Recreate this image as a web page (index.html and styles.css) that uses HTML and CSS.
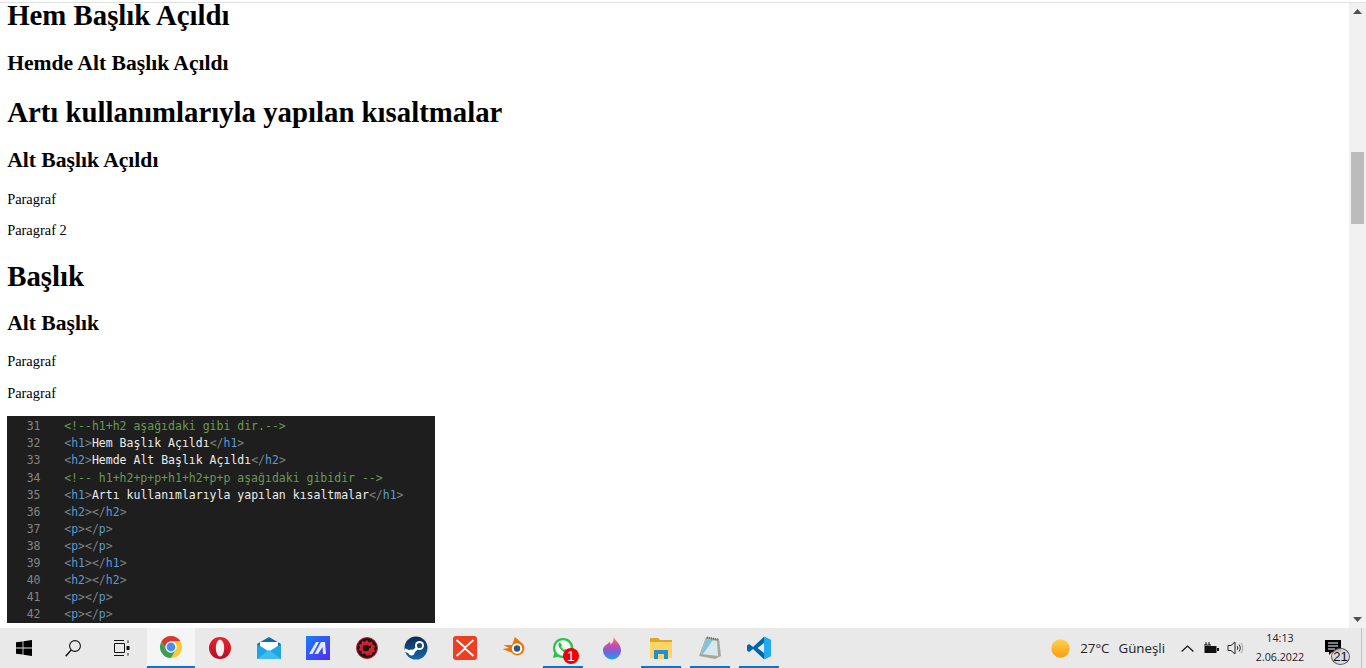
FILE: index.html
```html
<!DOCTYPE html>
<html lang="tr">
<head>
<meta charset="utf-8">
<title>Başlık</title>
<link rel="stylesheet" href="styles.css">
</head>
<body>
<div class="topline"></div>
<div class="viewport">
  <main class="doc">
    <h1 class="first">Hem Başlık Açıldı</h1>
    <h2>Hemde Alt Başlık Açıldı</h2>
    <h1>Artı kullanımlarıyla yapılan kısaltmalar</h1>
    <h2>Alt Başlık Açıldı</h2>
    <p>Paragraf</p>
    <p>Paragraf 2</p>
    <h1 class="low">Başlık</h1>
    <h2>Alt Başlık</h2>
    <p>Paragraf</p>
    <p>Paragraf</p>
    <div class="code">
      <div class="ln"><i>31</i><span class="c">&lt;!--h1+h2 aşağıdaki gibi dir.--&gt;</span></div>
      <div class="ln"><i>32</i><span><b>&lt;</b><u>h1</u><b>&gt;</b>Hem Başlık Açıldı<b>&lt;/</b><u>h1</u><b>&gt;</b></span></div>
      <div class="ln"><i>33</i><span><b>&lt;</b><u>h2</u><b>&gt;</b>Hemde Alt Başlık Açıldı<b>&lt;/</b><u>h2</u><b>&gt;</b></span></div>
      <div class="ln"><i>34</i><span class="c">&lt;!-- h1+h2+p+p+h1+h2+p+p aşağıdaki gibidir --&gt;</span></div>
      <div class="ln"><i>35</i><span><b>&lt;</b><u>h1</u><b>&gt;</b>Artı kullanımlarıyla yapılan kısaltmalar<b>&lt;/</b><u>h1</u><b>&gt;</b></span></div>
      <div class="ln"><i>36</i><span><b>&lt;</b><u>h2</u><b>&gt;&lt;/</b><u>h2</u><b>&gt;</b></span></div>
      <div class="ln"><i>37</i><span><b>&lt;</b><u>p</u><b>&gt;&lt;/</b><u>p</u><b>&gt;</b></span></div>
      <div class="ln"><i>38</i><span><b>&lt;</b><u>p</u><b>&gt;&lt;/</b><u>p</u><b>&gt;</b></span></div>
      <div class="ln"><i>39</i><span><b>&lt;</b><u>h1</u><b>&gt;&lt;/</b><u>h1</u><b>&gt;</b></span></div>
      <div class="ln"><i>40</i><span><b>&lt;</b><u>h2</u><b>&gt;&lt;/</b><u>h2</u><b>&gt;</b></span></div>
      <div class="ln"><i>41</i><span><b>&lt;</b><u>p</u><b>&gt;&lt;/</b><u>p</u><b>&gt;</b></span></div>
      <div class="ln"><i>42</i><span><b>&lt;</b><u>p</u><b>&gt;&lt;/</b><u>p</u><b>&gt;</b></span></div>
    </div>
  </main>
  <aside class="scrollbar">
    <svg class="arrow" viewBox="0 0 9 5" width="9" height="5"><path d="M4.5 0 9 5H0z" fill="#505050"/></svg>
    <div class="track"><div class="thumb"></div></div>
    <svg class="arrow" viewBox="0 0 9 5" width="9" height="5"><path d="M0 0h9L4.5 5z" fill="#505050"/></svg>
  </aside>
</div>
<footer class="taskbar">
  <div class="apps">
    <div class="app start"><svg viewBox="0 0 16 16" width="16" height="16"><path d="M0 2.3 6.6 1.400V7.600H0zM7.400 1.300 16 0V7.600H7.400zM0 8.400H6.600V14.600L0 13.700zM7.400 8.400H16V16L7.400 14.700z" fill="#000"/></svg></div>
    <div class="app"><svg viewBox="0 0 16 17" width="16" height="17"><circle cx="10" cy="6" r="5.400" fill="none" stroke="#111" stroke-width="1.100"/><path d="M6.200 10 .7 16.300" stroke="#111" stroke-width="1.400" fill="none"/></svg></div>
    <div class="app"><svg viewBox="0 0 16 16" width="16" height="16"><g fill="none" stroke="#111"><path d="M0 .5H10M0 15.500H10M.5 3.500H10.500V12.500H.5zM14 .5V3M14 13V15.500" stroke-width="1"/><path d="M14 6V10" stroke-width="3"/></g></svg></div>
    <div class="app active"><svg viewBox="0 0 24 24" width="24" height="24"><path d="M12 1A11 11 0 0 1 21.530 6.500H12A5.500 5.500 0 0 0 7.240 14.750L2.470 6.500A11 11 0 0 1 12 1z" fill="#d8382d"/><path d="M21.530 6.500A11 11 0 0 1 12 23L16.760 14.750A5.500 5.500 0 0 0 12 6.500z" fill="#fcc934"/><path d="M2.470 6.500 7.240 14.750A5.500 5.500 0 0 0 16.760 14.750L12 23A11 11 0 0 1 2.470 6.500z" fill="#3a9f52"/><circle cx="12" cy="12" r="5.500" fill="#fff"/><circle cx="12" cy="12" r="4.400" fill="#4a8cf0"/></svg></div>
    <div class="app"><svg viewBox="0 0 24 24" width="24" height="24"><defs><linearGradient id="op" x1="0.5" y1="0" x2="0.5" y2="1"><stop offset="0" stop-color="#e8242f"/><stop offset="1" stop-color="#b80d22"/></linearGradient></defs><circle cx="12" cy="12" r="11" fill="url(#op)"/><ellipse cx="12" cy="12" rx="4.200" ry="8.600" fill="#f4f0f0"/></svg></div>
    <div class="app"><svg viewBox="0 0 24 22" width="24" height="22"><path d="M0 7 12 0l12 7v2H0z" fill="#0a6cb3"/><path d="M3 5h18v8l-9 5-9-5z" fill="#fff"/><path d="M0 7 12 14.500 24 7V22H0z" fill="#1fa5e6"/><path d="M0 22 12 13 24 22z" fill="#3fbdf0"/></svg></div>
    <div class="app"><svg viewBox="0 0 24 24" width="24" height="24"><defs><linearGradient id="ma" x1="0" y1="0" x2="1" y2="1"><stop offset="0" stop-color="#1780fa"/><stop offset="1" stop-color="#5a28f0"/></linearGradient></defs><rect width="24" height="24" fill="url(#ma)"/><path d="M3 18 10 6h3L6.500 18zM8.500 18 15 6h4l1 12h-3l-.4-7L12 18z" fill="#e2ebff"/></svg></div>
    <div class="app"><svg viewBox="0 0 24 24" width="24" height="24"><circle cx="12" cy="12" r="10.500" fill="#1c1416" stroke="#d42030" stroke-width="1"/><path d="M12 4l2 2.400 3-.8.600 3 2.700 1.400-1.400 2.700 1.400 2.700-3 1-.7 3-3-.8L12 20l-2-2.400-3 .7-.6-3-2.700-1.400 1.400-2.700L3.700 9l2.700-.9.600-3 3 .7z" fill="#d42030"/><circle cx="11" cy="12" r="3.300" fill="#1c1416"/><path d="M12 12l4-3v3z" fill="#1c1416"/></svg></div>
    <div class="app"><svg viewBox="0 0 24 24" width="24" height="24"><defs><linearGradient id="st" x1="0.5" y1="0" x2="0.5" y2="1"><stop offset="0" stop-color="#0d2a52"/><stop offset="1" stop-color="#1668a8"/></linearGradient></defs><circle cx="12" cy="12" r="11.500" fill="url(#st)"/><path d="M.6 14 8 17l6-6" stroke="#fff" stroke-width="3" fill="none"/><circle cx="15.500" cy="9.500" r="4.500" fill="#fff"/><circle cx="15.500" cy="9.500" r="2.600" fill="#174a7c"/><circle cx="7.500" cy="16.500" r="3" fill="#fff"/></svg></div>
    <div class="app"><svg viewBox="0 0 24 24" width="24" height="24"><rect width="24" height="24" rx="3" fill="#ee3e24"/><path d="M3.500 4 12 11.500 20.500 4M3.500 20 12 12.500 20.500 20" stroke="#fff" stroke-width="1.800" fill="none"/></svg></div>
    <div class="app"><svg viewBox="0 0 24 24" width="24" height="24"><path d="M13 1 21 8a7 7 0 1 1-11.500 8.500L.5 13 7 12 1.500 9H10z" fill="#ea7600"/><circle cx="15" cy="12.500" r="5.200" fill="#fff"/><circle cx="15" cy="12.500" r="3.200" fill="#265787"/></svg></div>
    <div class="app running"><span class="wa"><svg viewBox="0 0 24 24" width="22" height="22"><path d="M12 1a11 11 0 0 0-9.500 16.500L1 23l5.700-1.500A11 11 0 1 0 12 1z" fill="#30c04e"/><circle cx="12" cy="12" r="8.500" fill="#f4fff6"/><path d="M8 6c-2 2-1 5 2 8s6 4 8 2l-3-3-2 1-3-3 1-2-2-3z" fill="#30c04e"/></svg><em>1</em></span></div>
    <div class="app"><svg viewBox="0 0 20 26" width="19" height="25"><defs><linearGradient id="pa" x1="0" y1="0" x2="0" y2="1"><stop offset="0" stop-color="#f5a020"/><stop offset=".35" stop-color="#d848a8"/><stop offset=".65" stop-color="#7a60dc"/><stop offset="1" stop-color="#1ea0e8"/></linearGradient></defs><path d="M11 0c1 4 8 8 8 15a9.500 9.500 0 0 1-19 0c0-5 5-6 7-9 1 1 1 2 1 3 2-2 4-5 3-9z" fill="url(#pa)"/></svg></div>
    <div class="app running"><svg viewBox="0 0 22 22" width="22" height="22"><path d="M0 1h8l2 2h12v5H0z" fill="#e0a526"/><rect y="5" width="22" height="16" fill="#ffd564"/><rect x="4" y="13" width="14" height="9" fill="#1f8fd6"/><rect x="8" y="17" width="6" height="5" fill="#ffd564"/></svg></div>
    <div class="app running"><svg viewBox="0 0 24 24" width="24" height="24"><path d="M8 1 21 3 23 20 17 23 1 20z" fill="#a8a898"/><path d="M8 3 19 5 20 20 3 18z" fill="#d8e8ee"/><path d="M8 3 15 4 5 18 3 18z" fill="#7fc4dc"/><path d="M9 1.500 20 3.500" stroke="#666" stroke-width="2" stroke-dasharray="1 1"/></svg></div>
    <div class="app running"><svg viewBox="0 0 24 24" width="24" height="24"><path d="M17 .8 24 4v16l-7 3.300L6 13l-4 3-2-1.500v-5L2 8l4 3z" fill="#0065a9"/><path d="M17 .8 24 4v16l-7 3.300z" fill="#23a9f2"/><path d="M17 7v10l-6.500-5z" fill="#e9e9e9"/></svg></div>
  </div>
  <div class="tray">
    <svg class="sun" viewBox="0 0 19 19" width="19" height="19"><defs><linearGradient id="sun" x1="0.5" y1="0" x2="0.5" y2="1"><stop offset="0" stop-color="#fdd154"/><stop offset="1" stop-color="#fb9d0e"/></linearGradient></defs><circle cx="9.500" cy="9.500" r="9.200" fill="url(#sun)"/></svg>
    <span class="temp">27°C</span>
    <span class="cond">Güneşli</span>
    <svg class="chev" viewBox="0 0 13 7" width="13" height="7"><path d="M.6 6.500 6.500 1l5.900 5.500" fill="none" stroke="#111" stroke-width="1.200"/></svg>
    <svg class="batt" viewBox="0 0 16 12" width="16" height="12"><path d="M3 0v3M6 0v3M1 3h7" stroke="#111" fill="none"/><rect x="2" y="4.500" width="11" height="6" fill="#111" stroke="#111"/><rect x="14" y="6" width="2" height="3" fill="#111"/></svg>
    <svg class="vol" viewBox="0 0 16 14" width="16" height="14"><path d="M1 4.500h3L8 1v12L4 9.500H1z" fill="none" stroke="#222"/><path d="M10 5c1 1 1 3 0 4M12 3.500c1.700 2 1.700 5 0 7" fill="none" stroke="#222"/><path d="M14 2c2.300 3 2.300 7 0 10" fill="none" stroke="#999"/></svg>
    <div class="clock"><span>14:13</span><span>2.06.2022</span></div>
    <div class="notif">
      <svg viewBox="0 0 16 15" width="16" height="15"><path d="M0 0h16v12H7l-3 3v-3H0z" fill="#000"/><path d="M3 3h10M3 6h10M3 9h7" stroke="#fff"/></svg>
      <em>21</em>
    </div>
    <div class="desk"></div>
  </div>
</footer>
</body>
</html>
```
FILE: styles.css
```css
html, body { margin: 0; padding: 0; height: 100%; }
body {
  display: flex;
  flex-direction: column;
  height: 668px;
  overflow: hidden;
  background: #fff;
  font-family: "Liberation Serif", serif;
  color: #000;
}
.topline { height: 3px; box-sizing: border-box; border-bottom: 1px solid #e0e0e0; flex: none; }
.viewport { flex: 1; display: flex; min-height: 0; }
.doc { flex: 1; min-width: 0; overflow: hidden; padding-left: 7.2px; }
h1 { font-size: 28.8px; margin: 20.3px 0 18.3px; font-weight: bold; }
h2 { font-size: 21.6px; margin: 17.9px 0; font-weight: bold; }
p { font-size: 14.4px; margin: 14.4px 0; }
h1.first { margin: 0 0 23.1px; line-height: 25px; }
h1.low { margin: 20.6px 0 18px; }

.code {
  width: 428px;
  height: 207px;
  margin-top: 13px;
  background: #1e1e1e;
  padding-top: 2px;
  box-sizing: border-box;
  font-family: "DejaVu Sans Mono", monospace;
  font-size: 11.5px;
  overflow: hidden;
}
.ln { height: 17.12px; line-height: 17.12px; display: flex; white-space: pre; color: #ececec; }
.ln i { font-style: normal; color: #858585; width: 57px; padding-left: 19.5px; box-sizing: border-box; flex: none; }
.ln b { font-weight: normal; color: #808080; }
.ln u { text-decoration: none; color: #569cd6; }
.ln .c { color: #6a9955; }

.scrollbar {
  width: 17px;
  flex: none;
  background: #f1f1f1;
  display: flex;
  flex-direction: column;
  align-items: center;
}
.arrow { flex: none; margin: 6px 0; }
.track { flex: 1; width: 100%; display: flex; flex-direction: column; }
.thumb { width: 13px; height: 72px; margin: 132px 2px 0; background: #bcbcbc; }

.taskbar {
  height: 40px;
  flex: none;
  background: #e9e9e9;
  display: flex;
  justify-content: space-between;
  font-family: "Open Sans", "Noto Sans", sans-serif;
  color: #222;
}
.apps { display: flex; gap: 1px; }
.app {
  width: 48px;
  height: 40px;
  display: flex;
  align-items: center;
  justify-content: center;
  box-sizing: border-box;
  position: relative;
}
.app.start { padding-right: 1px; }
.app.active { background: #f5f5f5; border-bottom: 2px solid #0078d4; }
.app.running::after {
  content: "";
  position: absolute;
  left: 4px;
  right: 4px;
  bottom: 0;
  height: 2px;
  background: #0078d4;
}
.wa { position: relative; display: block; width: 22px; height: 22px; }
.wa em {
  position: absolute;
  right: -5px;
  bottom: -5px;
  width: 16px;
  height: 16px;
  border-radius: 50%;
  background: #f00000;
  color: #fff;
  font: normal 14px/16px "Liberation Sans", sans-serif;
  text-align: center;
}
.tray { display: flex; align-items: center; font-size: 13.3px; }
.sun { margin-right: 10px; }
.temp { margin-right: 9px; }
.cond { margin-right: 16px; }
.chev { margin-right: 9px; }
.batt { margin-right: 8px; }
.vol { margin-right: 13px; }
.clock {
  display: flex;
  flex-direction: column;
  align-items: center;
  font-size: 10.7px;
  line-height: 19px;
  width: 48px;
  margin-right: 21px;
}
.notif { position: relative; width: 26px; height: 30px; margin-right: 10px; }
.notif svg { position: absolute; left: 0; top: 7px; }
.notif em {
  position: absolute;
  left: 6px;
  top: 15px;
  width: 19px;
  height: 17px;
  box-sizing: border-box;
  border: 1px solid #555;
  border-radius: 50%;
  background: rgba(215, 215, 215, .88);
  font: normal 13px/15px "Liberation Sans", sans-serif;
  text-align: center;
  color: #111;
}
.desk { width: 1px; height: 40px; background: #bdbdbd; margin-right: 4px; }
```
